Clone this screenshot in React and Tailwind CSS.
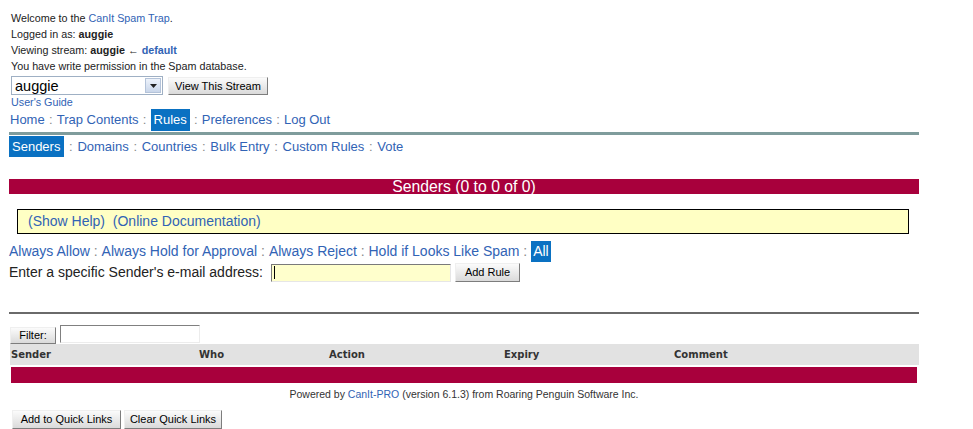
import React from "react";

const link = "text-[#3163b5]";
const sep12 = <span className="inline-block w-[12px] text-center text-[#8a8a8a]">:</span>;
const sep13 = <span className="inline-block w-[13px] text-center text-[#8a8a8a]">:</span>;
const sep = <span className="text-[#8a8a8a]"> : </span>;

function Btn({ children, className = "" }) {
  return (
    <div
      className={
        "flex items-center justify-center bg-gradient-to-b from-[#fbfbfb] to-[#dadada] border border-t-[#efefef] border-l-[#efefef] border-r-[#7d7d7d] border-b-[#7d7d7d] text-[11px] text-black font-['Liberation_Sans',Arial,sans-serif] " +
        className
      }
    >
      {children}
    </div>
  );
}

export default function App() {
  return (
    <div className="w-[973px] h-[429px] overflow-hidden bg-white font-['Liberation_Sans',Arial,sans-serif]">
      <div className="w-[910px] ml-[9px]">
        {/* Top info */}
        <div className="pt-[10px] pl-[2px] text-[10.75px] leading-[16px] text-[#222]">
          <div>
            Welcome to the <span className={link}>CanIt Spam Trap</span>.
          </div>
          <div>
            Logged in as: <b>auggie</b>
          </div>
          <div>
            Viewing stream: <b>auggie</b> ← <b className={link}>default</b>
          </div>
          <div>You have write permission in the Spam database.</div>
        </div>

        {/* Select row */}
        <div className="mt-[2px] ml-[2px] flex items-start h-[19px]">
          <div className="w-[152px] h-[19px] border border-[#9fb0c4] bg-white flex items-center">
            <span className="flex-1 pl-[3px] text-[14.5px] leading-[16px] text-black">auggie</span>
            <div className="w-[16px] h-[15px] mr-[1px] bg-gradient-to-b from-[#eef3fb] to-[#c9d6ea] border border-[#b4c3d9] flex items-center justify-center">
              <svg width="7" height="4" viewBox="0 0 7 4">
                <path d="M0 0 L7 0 L3.5 4 Z" fill="#222" />
              </svg>
            </div>
          </div>
          <Btn className="ml-[5px] mt-[1px] w-[100px] h-[18px]">View This Stream</Btn>
        </div>

        <div className={"ml-[2px] text-[10.75px] leading-[14px] " + link}>User's Guide</div>

        {/* Main nav */}
        <div className="h-[22px] flex items-center text-[13px] leading-[22px] whitespace-pre">
          <span className={"pl-[1px] " + link}>Home</span>
          {sep12}
          <span className={link}>Trap Contents</span>
          {sep12}
          <span className="bg-[#0a71c2] text-white px-[3px] h-[22px]">Rules</span>
          {sep12}
          <span className={link}>Preferences</span>
          {sep12}
          <span className={link}>Log Out</span>
        </div>
        <div className="mt-[1px] h-[3px] bg-[#7f9c9c]" />

        {/* Sub nav */}
        <div className="mt-[1px] h-[21px] flex items-center text-[13px] leading-[21px] whitespace-pre">
          <span className="bg-[#0a71c2] text-white pl-[3px] pr-[4px] h-[21px]">Senders</span>
          {sep13}
          <span className={link}>Domains</span>
          {sep13}
          <span className={link}>Countries</span>
          {sep13}
          <span className={link}>Bulk Entry</span>
          {sep13}
          <span className={link}>Custom Rules</span>
          {sep13}
          <span className={link}>Vote</span>
        </div>

        {/* Red title bar */}
        <div className="mt-[22px] h-[15px] bg-[#a8003c] text-white text-[15.75px] leading-[15px] text-center">
          Senders (0 to 0 of 0)
        </div>

        {/* Help box */}
        <div className="mt-[15px] ml-[8px] w-[892px] h-[25px] border border-black bg-[#ffffc4] flex items-center pl-[10px] text-[14px] whitespace-pre">
          <span className={link}>(Show Help)</span>
          <span> </span>
          <span className={link}> (Online Documentation)</span>
        </div>

        {/* Filter links */}
        <div className="mt-[7px] h-[21px] flex items-center text-[14px] leading-[21px] whitespace-pre">
          <span className={link}>Always Allow</span>
          {sep}
          <span className={link}>Always Hold for Approval</span>
          {sep}
          <span className={link}>Always Reject</span>
          {sep}
          <span className={link}>Hold if Looks Like Spam</span>
          {sep}
          <span className="bg-[#0a71c2] text-white px-[2px] h-[21px]">All</span>
        </div>

        {/* Enter sender */}
        <div className="mt-[1px] h-[19px] flex items-center text-[14px] text-[#222]">
          <span>Enter a specific Sender's e-mail address:</span>
          <div className="ml-[8px] w-[180px] h-[18px] bg-[#ffffcc] border border-t-[#7a7a7a] border-l-[#7a7a7a] border-r-[#e6e6e6] border-b-[#e6e6e6] flex items-center pl-[2px]">
            <div className="w-[1px] h-[13px] bg-black" />
          </div>
          <Btn className="ml-[4px] w-[65px] h-[19px]">Add Rule</Btn>
        </div>

        <div className="mt-[30px] h-[2px] bg-[#6a6a6a]" />

        {/* Filter */}
        <div className="mt-[11px] h-[19px] flex items-start">
          <Btn className="ml-[1px] mt-[2px] w-[46px] h-[17px]">Filter:</Btn>
          <div className="ml-[4px] w-[140px] h-[18px] bg-white border border-t-[#808080] border-l-[#808080] border-r-[#ececec] border-b-[#ececec]" />
        </div>

        {/* Table */}
        <div className="ml-[1px] h-[21px] bg-[#e2e2e2] grid grid-cols-[188px_130px_175px_170px_1fr] pl-[1px] items-center text-[10px] font-bold text-[#333] font-['DejaVu_Sans',Verdana,sans-serif]">
          <span>Sender</span>
          <span>Who</span>
          <span>Action</span>
          <span>Expiry</span>
          <span>Comment</span>
        </div>
        <div className="mt-[2px] ml-[2px] mr-[2px] h-[16px] bg-[#a8003c]" />

        <div className="mt-[4px] text-center text-[10.5px] leading-[14px] text-[#333]">
          Powered by <span className={link}>CanIt-PRO</span> (version 6.1.3) from Roaring Penguin Software Inc.
        </div>

        <div className="mt-[9px] ml-[3px] flex gap-[3px]">
          <Btn className="w-[109px] h-[19px]">Add to Quick Links</Btn>
          <Btn className="w-[98px] h-[19px]">Clear Quick Links</Btn>
        </div>
      </div>
    </div>
  );
}
